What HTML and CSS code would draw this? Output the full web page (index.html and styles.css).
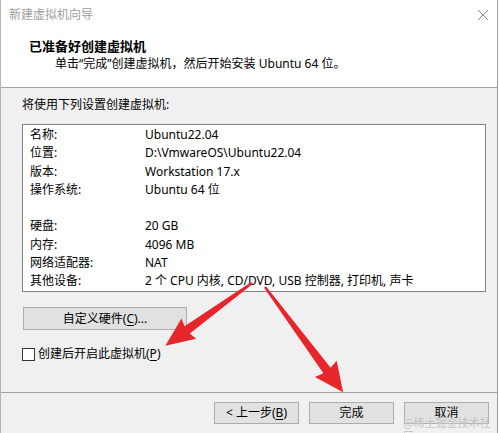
FILE: index.html
```html
<!DOCTYPE html>
<html lang="zh-CN">
<head>
<meta charset="utf-8">
<title>新建虚拟机向导</title>
<link rel="stylesheet" href="styles.css">
</head>
<body>
<div class="window">
  <div class="titlebar">
    <span class="title">新建虚拟机向导</span>
    <svg class="close" width="12" height="12" viewBox="0 0 12 12"><path d="M1 1 L11 11 M11 1 L1 11" stroke="#8a8a8a" stroke-width="1" fill="none"/></svg>
  </div>
  <div class="header">
    <div class="heading">已准备好创建虚拟机</div>
    <div class="subtitle">单击“完成”创建虚拟机，然后开始安装 Ubuntu 64 位。</div>
  </div>
  <div class="content">
    <div class="intro">将使用下列设置创建虚拟机:</div>
    <div class="listbox">
      <div class="row"><span class="label">名称:</span><span class="value">Ubuntu22.04</span></div>
      <div class="row"><span class="label">位置:</span><span class="value">D:\VmwareOS\Ubuntu22.04</span></div>
      <div class="row"><span class="label">版本:</span><span class="value">Workstation 17.x</span></div>
      <div class="row"><span class="label">操作系统:</span><span class="value">Ubuntu 64 位</span></div>
      <div class="row"></div>
      <div class="row"><span class="label">硬盘:</span><span class="value">20 GB</span></div>
      <div class="row"><span class="label">内存:</span><span class="value">4096 MB</span></div>
      <div class="row"><span class="label">网络适配器:</span><span class="value">NAT</span></div>
      <div class="row"><span class="label">其他设备:</span><span class="value">2 个 CPU 内核, CD/DVD, USB 控制器, 打印机, 声卡</span></div>
    </div>
    <button class="btn btn-custom">自定义硬件(<u>C</u>)...</button>
    <label class="check"><span class="box"></span><span class="check-text">创建后开启此虚拟机(<u>P</u>)</span></label>
  </div>
  <div class="footer">
    <button class="btn">&lt; 上一步(<u>B</u>)</button>
    <button class="btn">完成</button>
    <button class="btn">取消</button>
  </div>
  <svg class="arrows" width="499" height="433" viewBox="0 0 499 433">
    <g transform="translate(252,283) rotate(144.1)">
      <polygon points="0,-1.2 80,-4.5 78,-12.5 107,0 78,12.5 80,4.5 0,1.2" fill="#e6262b"/>
    </g>
    <g transform="translate(265,287) rotate(53.4)">
      <polygon points="0,-1.2 104,-4.5 102,-13.5 131,0 102,13.5 104,4.5 0,1.2" fill="#e6262b"/>
    </g>
  </svg>
  <div class="watermark">@稀土掘金技术社区</div>
</div>
</body>
</html>
```
FILE: styles.css
```css
* { box-sizing: border-box; }
html, body { margin: 0; padding: 0; background: #ffffff; }
body {
  font-family: "Noto Sans", "Noto Sans CJK SC", sans-serif;
  font-size: 12px;
  color: #000;
}
.window {
  position: relative;
  width: 498px;
  height: 433px;
  border-left: 1px solid #b4b4b4;
  border-right: 1px solid #9c9c9c;
  display: flex;
  flex-direction: column;
  background: #ffffff;
}
.titlebar {
  height: 30px;
  display: flex;
  align-items: center;
  justify-content: space-between;
  padding: 0 8px 0 8px;
}
.title {
  color: #9d9d9d;
  font-size: 12px;
  line-height: 16px;
}
.close { display: block; }
.header {
  height: 58px;
  background: #fff;
  border-bottom: 1px solid #a0a0a0;
  padding: 8px 0 0 28px;
}
.heading {
  font-weight: bold;
  font-size: 13px;
  line-height: 17px;
}
.subtitle {
  padding-left: 26px;
  line-height: 17px;
}
.content {
  flex: 1;
  background: #f0f0f0;
  padding: 8px 11px 0 21px;
  display: flex;
  flex-direction: column;
  align-items: flex-start;
}
.intro { line-height: 18px; }
.listbox {
  margin-top: 10px;
  width: 100%;
  height: 168px;
  background: #fff;
  border: 1px solid #828282;
  padding: 1px 0 0 7px;
}
.row {
  display: flex;
  height: 18.25px;
  line-height: 18px;
  white-space: nowrap;
}
.label { width: 115px; flex: none; }
.btn {
  font-family: inherit;
  font-size: 12px;
  color: #000;
  background: #e1e1e1;
  border: 1px solid #adadad;
  border-radius: 0;
  padding: 0;
  height: 22px;
  line-height: 20px;
  width: 85px;
}
.btn u { text-decoration: underline; text-underline-offset: 2px; }
.btn-custom {
  margin: 15px 0 0 1px;
  width: 164px;
  height: 23px;
}
.check {
  margin-top: 15px;
  display: flex;
  align-items: center;
  line-height: 18px;
  gap: 3px;
}
.check u { text-underline-offset: 2px; }
.box {
  width: 13px;
  height: 13px;
  border: 1px solid #333;
  background: #fff;
}
.footer {
  height: 41px;
  background: #f0f0f0;
  border-top: 1px solid #a0a0a0;
  display: flex;
  justify-content: flex-end;
  align-items: flex-start;
  gap: 10px;
  padding: 9px 8px 0 0;
}
.arrows {
  position: absolute;
  left: -1px;
  top: 0;
  pointer-events: none;
}
.watermark {
  position: absolute;
  left: 402px;
  top: 416px;
  font-size: 11px;
  line-height: 13px;
  color: rgba(170, 170, 170, 0.75);
  text-shadow: 0 0 1px rgba(255,255,255,0.8);
  font-family: "Noto Sans CJK SC", serif;
}
```
